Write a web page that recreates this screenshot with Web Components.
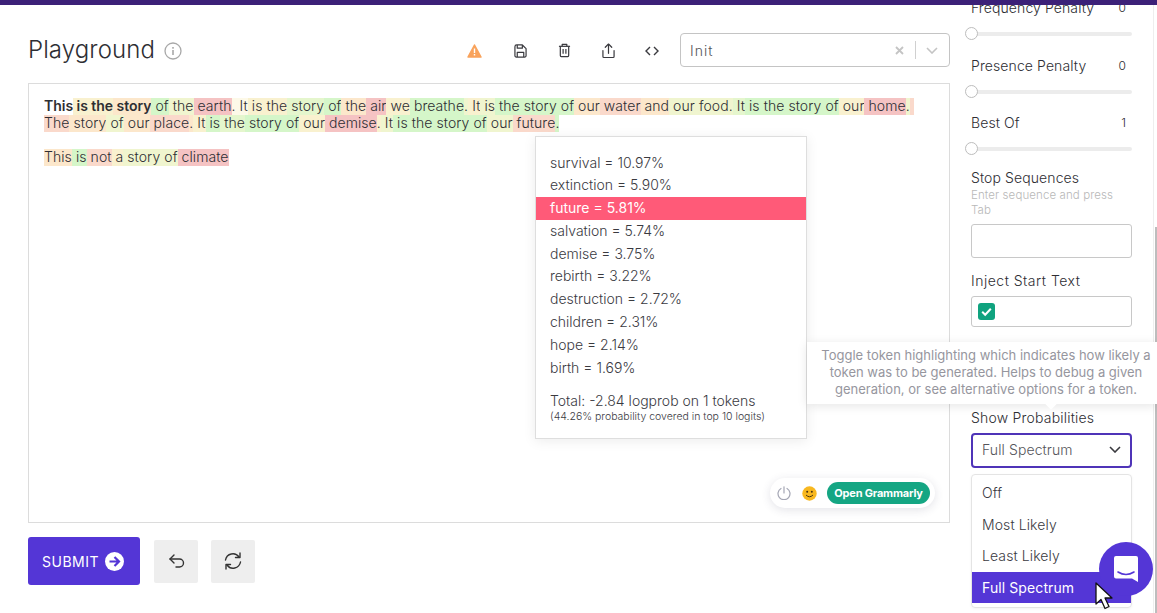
<!DOCTYPE html>
<html>
<head>
<meta charset="utf-8">
<title>Playground</title>
<style>
  html, body { margin: 0; height: 100%; overflow: hidden; background: #fff; }
  body { font-family: Inter, "Liberation Sans", sans-serif; font-weight: 300; color: #2e2e33; letter-spacing: .1px; }
</style>
</head>
<body>
<play-app></play-app>
<script>
const COLORS = {
  n: 'transparent',
  v: '#fdf9e8',
  g: '#d5f6c9',
  l: '#e5f6cd',
  y: '#f0f5cf',
  w: '#f9f1cf',
  o: '#fce7cb',
  s: '#fad9cb',
  r: '#f5c3c3'
};

// [text, colour key, bold]
const TOKENS = [
  [
    ['This', 'n', 1], [' is', 'w', 1], [' the', 'w', 1], [' story', 'o', 1], [' of', 'g'], [' the', 'y'], [' earth', 'r'], ['.', 'v'],
    [' It', 'v'], [' is', 'w'], [' the', 'w'], [' story', 'l'], [' of', 'g'], [' the', 'o'], [' air', 'r'], [' we', 'w'], [' breathe', 'g'], ['.', 'y'],
    [' It', 'w'], [' is', 'y'], [' the', 'g'], [' story', 'g'], [' of', 'g'], [' our', 'o'], [' water', 's'], [' and', 'o'], [' our', 'y'], [' food', 'y'], ['.', 'y'],
    [' It', 'l'], [' is', 'g'], [' the', 'g'], [' story', 'g'], [' of', 'g'], [' our', 'w'], [' home', 'r'], ['.', 'y'],
    [' The', 's'], [' story', 'o'], [' of', 'y'], [' our', 'o'], [' place', 's'], ['.', 'o'], [' It', 'w'], [' is', 'g'], [' the', 'l'], [' story', 'g'], [' of', 'g'], [' our', 'w'], [' demise', 'r'], ['.', 'w'],
    [' It', 'y'], [' is', 'g'], [' the', 'g'], [' story', 'g'], [' of', 'g'], [' our', 'y'], [' future', 's'], ['.', 'g']
  ],
  [
    ['This', 'o'], [' is', 'g'], [' not', 's'], [' a', 'w'], [' story', 'y'], [' of', 'y'], [' climate', 'r']
  ]
];

const ICONS = {
  warn: '<svg width="15" height="14" viewBox="0 0 15 14"><path d="M7.500 1 L14 13 H1 Z" fill="#f9a35c" stroke="#f9a35c" stroke-width="1.500" stroke-linejoin="round"/><rect x="6.800" y="4.500" width="1.400" height="4.500" fill="#fff"/><rect x="6.800" y="10" width="1.400" height="1.500" fill="#fff"/></svg>',
  save: '<svg width="13" height="14" viewBox="0 0 14 15" fill="none" stroke="#3a3a3f" stroke-width="1.300" stroke-linejoin="round"><path d="M1 3 a2 2 0 0 1 2-2 h6 l4 4 v7.500 a1.500 1.500 0 0 1-1.500 1.500 h-9 a1.500 1.500 0 0 1-1.500-1.500 Z"/><path d="M3.500 1 v3.500 h5.500 V1"/><path d="M3.500 14 v-5 h7 v5"/></svg>',
  trash: '<svg width="13" height="15" viewBox="0 0 14 16" fill="none" stroke="#3a3a3f" stroke-width="1.300" stroke-linejoin="round"><path d="M1 3.500 h12"/><path d="M4.500 3.500 V1.500 h5 v2"/><path d="M2.500 3.500 v10 a1 1 0 0 0 1 1 h7 a1 1 0 0 0 1-1 v-10"/><path d="M5.500 6.500 v5 M8.500 6.500 v5"/></svg>',
  share: '<svg width="13" height="16" viewBox="0 0 14 17" fill="none" stroke="#3a3a3f" stroke-width="1.300" stroke-linecap="round" stroke-linejoin="round"><path d="M7 11 V1.500"/><path d="M3.500 4.500 L7 1 l3.500 3.500"/><path d="M1 8 v6.500 a1 1 0 0 0 1 1 h10 a1 1 0 0 0 1-1 V8"/></svg>',
  code: '<svg width="14" height="10" viewBox="0 0 14 10" fill="none" stroke="#3a3a3f" stroke-width="1.400"><path d="M5 1 L1 5 l4 4"/><path d="M9 1 l4 4 -4 4"/></svg>',
  chevron: '<svg width="12" height="7" viewBox="0 0 12 7" fill="none" stroke="#3a3a3f" stroke-width="1.600"><path d="M1 1 l5 5 5-5"/></svg>'
};

class PlayApp extends HTMLElement {
  constructor() {
    super();
    this.attachShadow({ mode: 'open' });
  }

  connectedCallback() {
    this.shadowRoot.innerHTML = `
      <style>
        :host { display: flex; flex-direction: column; height: 613px; position: relative; overflow: hidden; }
        .topbar { height: 5px; flex: none; background: #3c2178; position: relative; z-index: 3; }
        .body { flex: 1; display: flex; min-height: 0; }
        play-main { flex: none; width: 950px; }
        play-sidebar { flex: 1; }
      </style>
      <div class="topbar"></div>
      <div class="body">
        <play-main></play-main>
        <play-sidebar></play-sidebar>
      </div>
      <logit-popover></logit-popover>
      <hint-tooltip>Toggle token highlighting which indicates how likely a token was to be generated. Helps to debug a given generation, or see alternative options for a token.</hint-tooltip>
      <chat-bubble></chat-bubble>
    `;
  }
}

class PlayMain extends HTMLElement {
  constructor() {
    super();
    this.attachShadow({ mode: 'open' });
  }

  connectedCallback() {
    this.shadowRoot.innerHTML = `
      <style>
        :host { display: block; box-sizing: border-box; padding: 29px 0 0 28px; }
        .head { display: flex; align-items: center; height: 32px; margin-bottom: 17px; }
        h1 { margin: 0; font-size: 24px; font-weight: 300; color: #2e2e33; line-height: 32px; }
        .info { margin-left: 9px; margin-top: 2px; width: 18px; height: 18px; display: block; }
        .tools { margin-left: auto; display: flex; align-items: center; }
        .tool { width: 44px; height: 32px; display: flex; align-items: center; justify-content: center; margin-top: 1px; }
        .tool.warn { padding-right: 3px; box-sizing: border-box; }
        preset-select { margin-left: 6px; }
        token-editor { height: 440px; }
        .actions { display: flex; align-items: center; margin-top: 14px; }
        .submit { width: 112px; height: 48px; box-sizing: border-box; border-radius: 3px; background: #5436d6; color: #fff;
          display: flex; align-items: center; justify-content: center; gap: 6px; font-size: 14px; font-weight: 400; letter-spacing: .5px; }
        .submit svg { margin-right: 2px; }
        .sq { width: 44px; height: 43px; border-radius: 2px; background: #eeeeee; display: flex; align-items: center; justify-content: center; margin-left: 13px; }
        .sq.first { margin-left: 14px; }
      </style>
      <div class="head">
        <h1>Playground</h1>
        <svg class="info" viewBox="0 0 18 18" fill="none"><circle cx="9" cy="9" r="8" stroke="#a8a8a8" stroke-width="1.300"/><rect x="8.200" y="8" width="1.600" height="5" fill="#a8a8a8"/><rect x="8.200" y="5" width="1.600" height="1.700" fill="#a8a8a8"/></svg>
        <div class="tools">
          <div class="tool warn">${ICONS.warn}</div>
          <div class="tool">${ICONS.save}</div>
          <div class="tool">${ICONS.trash}</div>
          <div class="tool">${ICONS.share}</div>
          <div class="tool">${ICONS.code}</div>
          <preset-select>Init</preset-select>
        </div>
      </div>
      <token-editor></token-editor>
      <div class="actions">
        <div class="submit">SUBMIT
          <svg width="19" height="19" viewBox="0 0 19 19"><circle cx="9.500" cy="9.500" r="9.500" fill="#fff"/><path d="M4.500 9.500 h9 M9.500 5 l4.500 4.500 -4.500 4.500" fill="none" stroke="#5436d6" stroke-width="2.200"/></svg>
        </div>
        <div class="sq first">
          <svg width="16" height="14" viewBox="0 0 16 14" fill="none" stroke="#333" stroke-width="1.400" stroke-linecap="round" stroke-linejoin="round" style="margin-left:2px"><path d="M5 1 L1 5 l4 4"/><path d="M1 5 h9.500 a4 4 0 0 1 0 8 H7"/></svg>
        </div>
        <div class="sq">
          <svg width="20" height="18" viewBox="0 0 20 18" fill="none" stroke="#333" stroke-width="1.400" stroke-linecap="round" stroke-linejoin="round"><path d="M2.500 8 A7.500 7.500 0 0 1 16 5"/><path d="M17 1 v4.500 h-4.500"/><path d="M17.500 10 A7.500 7.500 0 0 1 4 13"/><path d="M3 17 v-4.500 h4.500"/></svg>
        </div>
      </div>
    `;
  }
}

class PresetSelect extends HTMLElement {
  constructor() {
    super();
    this.attachShadow({ mode: 'open' });
  }

  connectedCallback() {
    this.shadowRoot.innerHTML = `
      <style>
        :host { display: flex; align-items: center; box-sizing: border-box; width: 270px; height: 34px; border: 1px solid #c4c4c4; border-radius: 4px; padding-left: 9px; font-size: 14px; color: #55555a; letter-spacing: 1px; }
        .x { margin-left: auto; }
        .sep { width: 1px; height: 18px; background: #d0d0d0; margin: 0 10px 0 11px; }
        .arrow { margin-right: 11px; display: flex; }
      </style>
      <slot></slot>
      <svg class="x" width="9" height="9" viewBox="0 0 9 9" stroke="#c4c4c4" stroke-width="1.800"><path d="M1 1 l7 7 M8 1 l-7 7"/></svg>
      <span class="sep"></span>
      <span class="arrow"><svg width="12" height="7" viewBox="0 0 12 7" fill="none" stroke="#c4c4c4" stroke-width="1.600"><path d="M1 1 l5 5 5-5"/></svg></span>
    `;
  }
}

class TokenEditor extends HTMLElement {
  constructor() {
    super();
    this.attachShadow({ mode: 'open' });
  }

  connectedCallback() {
    // the highlight sits 1px below the text box, same as the reference's font metrics
    const paras = TOKENS.map(p => '<p>' + p.map(([text, c, bold]) => {
      const col = COLORS[c];
      return `<span class="${bold ? 'b' : ''}" style="background:linear-gradient(${col},${col}) 0 1px / 100% 17px no-repeat">${text}</span>`;
    }).join('') + '</p>').join('');
    this.shadowRoot.innerHTML = `
      <style>
        :host { display: block; box-sizing: border-box; border: 1px solid #dcdcdc; padding: 13px 15px; position: relative; font-size: 14px; line-height: 17px; color: #2e2e33; letter-spacing: .07px; }
        p { margin: 0 0 17px; white-space: pre-wrap; }
        span { padding-bottom: 1px; }
        .b { font-weight: 600; letter-spacing: -.03px; }
        grammarly-pill { position: absolute; right: 14px; bottom: 14px; letter-spacing: 0; }
      </style>
      ${paras}
      <grammarly-pill></grammarly-pill>
    `;
  }
}

class GrammarlyPill extends HTMLElement {
  constructor() {
    super();
    this.attachShadow({ mode: 'open' });
  }

  connectedCallback() {
    this.shadowRoot.innerHTML = `
      <style>
        :host { display: flex; align-items: center; height: 30px; width: 165px; box-sizing: border-box; padding: 0 5px 0 7px; background: #fff; border-radius: 15px; box-shadow: 0 2px 10px rgba(60,60,90,.14); }
        .open { margin-left: auto; width: 103px; height: 22px; border-radius: 11px; background: #15a683; color: #fff; font-size: 11px; font-weight: 700; display: flex; align-items: center; justify-content: center; letter-spacing: -.2px; }
        .smile { margin-left: 11px; }
      </style>
      <svg width="14" height="14" viewBox="0 0 14 14" fill="none" stroke="#a4a6b4" stroke-width="1.200" stroke-linecap="round"><path d="M4 2.500 A6 6 0 1 0 10 2.500"/><path d="M7 .8 V7"/></svg>
      <svg class="smile" width="15" height="15" viewBox="0 0 15 15"><circle cx="7.500" cy="7.500" r="7.200" fill="#f8b820"/><circle cx="5.200" cy="5.800" r="1" fill="#4a3410"/><circle cx="9.800" cy="5.800" r="1" fill="#4a3410"/><path d="M4 9 q3.500 3.500 7 0" fill="none" stroke="#4a3410" stroke-width="1"/></svg>
      <div class="open">Open Grammarly</div>
    `;
  }
}

class PlaySlider extends HTMLElement {
  constructor() {
    super();
    this.attachShadow({ mode: 'open' });
  }

  connectedCallback() {
    this.shadowRoot.innerHTML = `
      <style>
        :host { display: block; }
        .row { display: flex; justify-content: space-between; height: 20px; line-height: 20px; font-size: 14px; }
        .val { font-size: 12px; margin-right: 6px; }
        .track { height: 4px; background: #ececec; border-radius: 2px; margin: 14px 0 0 1px; position: relative; }
        .thumb { position: absolute; left: -7px; top: -5px; width: 11px; height: 11px; border-radius: 50%; background: #fff; border: 1px solid #bdbdbd; }
      </style>
      <div class="row"><span>${this.getAttribute('label')}</span><span class="val">${this.getAttribute('value')}</span></div>
      <div class="track"><div class="thumb"></div></div>
    `;
  }
}

class PlaySidebar extends HTMLElement {
  constructor() {
    super();
    this.attachShadow({ mode: 'open' });
  }

  connectedCallback() {
    this.shadowRoot.innerHTML = `
      <style>
        :host { display: block; box-sizing: border-box; position: relative; border-right: 1px solid #eeeeee; margin-right: 3px; padding: 0 21px 0 21px; height: 100%; overflow: visible; color: #2e2e33; }
        .scroll { margin-top: -7px; }
        play-slider { margin-bottom: 19px; }
        play-slider.first { margin-bottom: 20px; }
        .label { font-size: 14px; line-height: 20px; }
        .hint { font-size: 11.500px; line-height: 15px; color: #b8b8b8; }
        .box { box-sizing: border-box; border: 1px solid #c8c8c8; border-radius: 3px; }
        .stop { margin-top: -2px; }
        .input { height: 34px; margin-top: 6px; }
        .inject { margin-top: 13px; letter-spacing: .5px; }
        .check { height: 31px; margin-top: 5px; display: flex; align-items: center; padding-left: 6px; }
        .show { margin-top: 81px; letter-spacing: .2px; }
        .select { margin-top: 5px; height: 35px; border: 2px solid #4f34b8; border-radius: 4px; box-sizing: border-box; display: flex; align-items: center; justify-content: space-between; padding: 0 9px 2px 9px; font-size: 14px; color: #55555a; }
        .menu { margin-top: 6px; border: 1px solid #e4e4e4; border-radius: 4px; box-sizing: border-box; height: 134px; padding-top: 2px; font-size: 14px; box-shadow: 0 1px 3px rgba(0,0,0,.05); overflow: hidden; }
        .opt { height: 31.500px; line-height: 31.500px; padding-left: 10px; color: #3a3a3f; }
        .opt.on { background: #5436d6; color: #fff; font-weight: 400; }
        .scrollbar { position: absolute; right: -4px; top: 222px; bottom: 0; width: 2px; background: #bdbdbd; }
      </style>
      <div class="scroll">
        <play-slider class="first" label="Frequency Penalty" value="0"></play-slider>
        <play-slider label="Presence Penalty" value="0"></play-slider>
        <play-slider label="Best Of" value="1"></play-slider>
        <div class="label stop">Stop Sequences</div>
        <div class="hint">Enter sequence and press<br>Tab</div>
        <div class="box input"></div>
        <div class="label inject">Inject Start Text</div>
        <div class="box check">
          <svg width="17" height="17" viewBox="0 0 17 17"><rect width="17" height="17" rx="3" fill="#10a37f"/><path d="M4.200 8.800 l3 3 5.600-6" fill="none" stroke="#fff" stroke-width="2"/></svg>
        </div>
        <div class="label show">Show Probabilities</div>
        <div class="select">Full Spectrum ${ICONS.chevron}</div>
        <div class="menu">
          <div class="opt">Off</div>
          <div class="opt">Most Likely</div>
          <div class="opt">Least Likely</div>
          <div class="opt on">Full Spectrum</div>
        </div>
      </div>
      <div class="scrollbar"></div>
    `;
  }
}

class LogitPopover extends HTMLElement {
  constructor() {
    super();
    this.attachShadow({ mode: 'open' });
  }

  connectedCallback() {
    const rows = [
      ['survival', '10.97'], ['extinction', '5.90'], ['future', '5.81', 1], ['salvation', '5.74'], ['demise', '3.75'],
      ['rebirth', '3.22'], ['destruction', '2.72'], ['children', '2.31'], ['hope', '2.14'], ['birth', '1.69']
    ].map(([w, p, on]) => `<div class="row${on ? ' on' : ''}">${w} = ${p}%</div>`).join('');
    this.shadowRoot.innerHTML = `
      <style>
        :host { position: absolute; left: 535px; top: 136px; width: 272px; height: 303px; box-sizing: border-box; background: #fff; border: 1px solid #dedede; box-shadow: 0 2px 12px rgba(0,0,0,.08); padding-top: 14.500px; z-index: 1; font-size: 14px; color: #3a3a3f; letter-spacing: 0; }
        .row { height: 22.800px; line-height: 22.800px; padding-left: 14px; }
        .row.on { background: #ff5a78; color: #fff; font-weight: 400; }
        .total { margin: 13px 0 0 14px; line-height: 17px; }
        small { display: block; font-size: 10.500px; line-height: 13px; margin-top: 1px; }
      </style>
      ${rows}
      <div class="total">Total: -2.84 logprob on 1 tokens<small>(44.26% probability covered in top 10 logits)</small></div>
    `;
  }
}

class HintTooltip extends HTMLElement {
  constructor() {
    super();
    this.attachShadow({ mode: 'open' });
  }

  connectedCallback() {
    this.shadowRoot.innerHTML = `
      <style>
        :host { position: absolute; left: 807px; top: 342px; width: 350px; height: 62px; box-sizing: border-box; padding: 5px 3px 0 11px; background: #fff; text-align: center; font-size: 13px; line-height: 17px; color: #96969e; box-shadow: 0 2px 10px rgba(0,0,0,.1); z-index: 2; font-weight: 400; letter-spacing: 0; }
        .arrow { position: absolute; left: 240px; bottom: -4px; width: 8px; height: 8px; background: #fff; transform: rotate(45deg); }
      </style>
      <slot></slot>
      <div class="arrow"></div>
    `;
  }
}

class ChatBubble extends HTMLElement {
  constructor() {
    super();
    this.attachShadow({ mode: 'open' });
  }

  connectedCallback() {
    this.shadowRoot.innerHTML = `
      <style>
        :host { position: absolute; left: 1099px; top: 542px; width: 54px; height: 54px; border-radius: 50%; background: #5436d6; display: flex; align-items: center; justify-content: center; z-index: 4; }
        .cursor { position: absolute; left: -4px; top: 40px; }
      </style>
      <svg width="26" height="28" viewBox="0 0 26 28"><path d="M3 1 h20 a2 2 0 0 1 2 2 v24 l-6-3.500 H3 a2 2 0 0 1-2-2 V3 a2 2 0 0 1 2-2 Z" fill="#fff"/><path d="M5 17 q8 5 16 0" fill="none" stroke="#5436d6" stroke-width="1.600" stroke-linecap="round"/></svg>
      <svg class="cursor" width="20" height="28" viewBox="0 0 20 28"><path d="M1 1 V22 L6 17.500 L10 26.500 L14 24.500 L10 16 H17 Z" fill="#fff" stroke="#111" stroke-width="1.300" stroke-linejoin="round"/></svg>
    `;
  }
}

customElements.define('play-app', PlayApp);
customElements.define('play-main', PlayMain);
customElements.define('preset-select', PresetSelect);
customElements.define('token-editor', TokenEditor);
customElements.define('grammarly-pill', GrammarlyPill);
customElements.define('play-slider', PlaySlider);
customElements.define('play-sidebar', PlaySidebar);
customElements.define('logit-popover', LogitPopover);
customElements.define('hint-tooltip', HintTooltip);
customElements.define('chat-bubble', ChatBubble);
</script>
</body>
</html>
